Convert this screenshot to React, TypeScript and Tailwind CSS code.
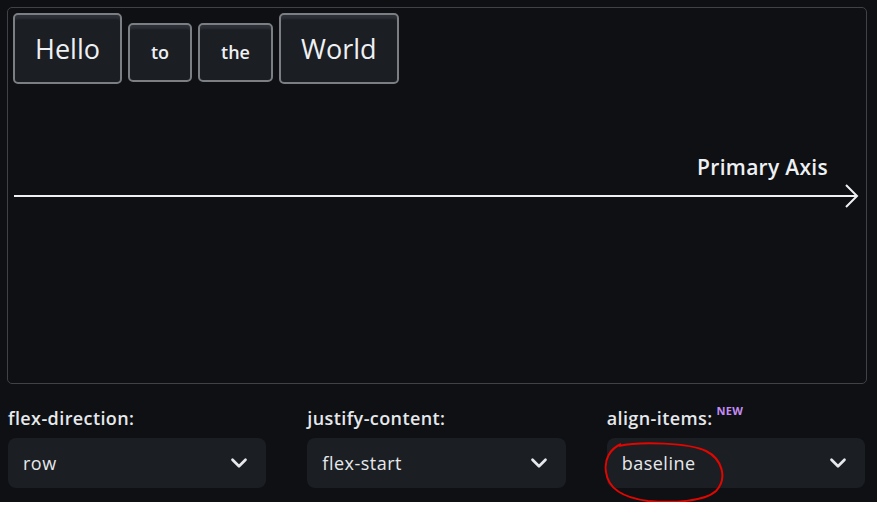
import { ChevronDown } from 'lucide-react'

const font = { fontFamily: '"Open Sans", "Noto Sans", sans-serif' }

function Item({ label, big }: { label: string; big?: boolean }) {
  return (
    <div
      className={`rounded-[5px] border-2 border-[#7b7e83] bg-[#1b1e23] py-[14px] text-[#eef0f3] shadow-[inset_0_5px_2px_-1px_#2c2f35] ${
        big ? 'px-[20px] text-[27px] leading-[39px]' : 'px-[21px] text-[18px] leading-[27px] font-semibold'
      }`}
    >
      {label}
    </div>
  )
}

function Control({ label, value, isNew }: { label: string; value: string; isNew?: boolean }) {
  return (
    <div className="flex flex-col">
      <div className="flex items-start h-[31px]">
        <span className="text-[18px] font-semibold leading-[22px] tracking-[0.4px] text-[#e6e8eb]">{label}</span>
        {isNew && (
          <span className="ml-[4px] mt-[-4px] text-[11px] font-bold tracking-wide text-[#c58cf5]">NEW</span>
        )}
      </div>
      <div className="flex h-[50px] items-center justify-between rounded-lg bg-[#1b1e23] pl-[15px] pr-[14px]">
        <span className="text-[18px] font-medium tracking-[0.5px] text-[#e6e8eb]">{value}</span>
        <ChevronDown className="h-[26px] w-[26px] text-[#e6e8eb]" strokeWidth={2.5} />
      </div>
    </div>
  )
}

export default function App() {
  return (
    <div className="relative h-[502px] w-[877px] overflow-hidden bg-[#0e1014] pl-[7px] pt-[7px]" style={font}>
      {/* Flex demo area */}
      <div className="relative h-[377px] w-[860px] rounded-[5px] border border-[#3f4247] p-[5px]">
        <div className="flex items-baseline gap-[6px]">
          <Item label="Hello" big />
          <Item label="to" />
          <Item label="the" />
          <Item label="World" big />
        </div>

        {/* Primary axis indicator */}
        <div className="absolute left-[8px] right-[6px] top-[146px] flex flex-col items-end">
          <span className="mr-[32px] text-[21px] font-semibold leading-[26px] tracking-[0.3px] text-[#eef0f3]">Primary Axis</span>
          <svg className="mt-[3px]" width="846" height="26" viewBox="0 0 846 26">
            <line x1="0" y1="13" x2="843" y2="13" stroke="#eef0f3" strokeWidth="2" />
            <path d="M832 2 L843 13 L832 24" fill="none" stroke="#eef0f3" strokeWidth="2" />
          </svg>
        </div>
      </div>

      {/* Controls */}
      <div className="mt-[23px] grid w-[858px] grid-cols-3 gap-[41px] pl-[1px]">
        <Control label="flex-direction:" value="row" />
        <Control label="justify-content:" value="flex-start" />
        <Control label="align-items:" value="baseline" isNew />
      </div>

      {/* Hand-drawn annotation */}
      <svg className="pointer-events-none absolute left-0 top-0" width="877" height="505" viewBox="0 0 877 505">
        <path
          d="M619 446 C 640 441, 690 443, 706 451 C 722 459, 728 478, 716 491 C 704 502, 672 503, 648 501 C 625 498, 608 489, 606 472 C 604 459, 610 449, 621 444"
          fill="none"
          stroke="#e10600"
          strokeWidth="2"
        />
      </svg>
    </div>
  )
}
